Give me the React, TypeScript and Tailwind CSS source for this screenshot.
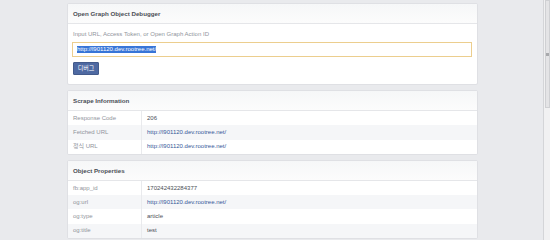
import type { ReactNode } from 'react'

const font = { fontFamily: '"Liberation Sans", Arial, "Noto Sans CJK KR", sans-serif' }

const URL = 'http://l901120.dev.rootree.net/'

interface Row {
  label: string
  value: string
  link?: boolean
}

const scrapeRows: Row[] = [
  { label: 'Response Code', value: '206' },
  { label: 'Fetched URL', value: URL, link: true },
  { label: '정식 URL', value: URL, link: true },
]

const propRows: Row[] = [
  { label: 'fb:app_id', value: '170242432284377' },
  { label: 'og:url', value: URL, link: true },
  { label: 'og:type', value: 'article' },
  { label: 'og:title', value: 'test' },
]

function Card({ title, children }: { title: string; children: ReactNode }) {
  return (
    <div className="bg-white border border-[#dfe0e4] rounded-[2px] overflow-hidden">
      <div className="h-[20px] flex items-center px-[5px] border-b border-[#e5e6e9] bg-gradient-to-b from-[#f6f7f8] to-[#fcfcfc]">
        <span className="text-[6.2px] font-bold text-[#4b4f56]">{title}</span>
      </div>
      {children}
    </div>
  )
}

function InfoTable({ rows }: { rows: Row[] }) {
  return (
    <div>
      {rows.map((row, i) => (
        <div key={row.label} className={`flex h-[14.3px] ${i % 2 === 1 ? 'bg-[#f5f6f8]' : 'bg-white'}`}>
          <div className="w-[74px] shrink-0 px-[5px] flex items-center border-r border-[#e9eaed] text-[6px] text-[#90949c]">
            {row.label}
          </div>
          <div
            className={`flex-1 px-[5px] flex items-center text-[6px] ${row.link ? 'text-[#365899]' : 'text-[#4b4f56]'}`}
          >
            {row.value}
          </div>
        </div>
      ))}
    </div>
  )
}

export default function App() {
  return (
    <div className="w-[550px] h-[240px] overflow-hidden bg-[#e9eaed] flex" style={font}>
      <div className="flex-1 pl-[67px] pt-[3px]">
        <div className="w-[411px] flex flex-col gap-[5px]">
          <Card title="Open Graph Object Debugger">
            <div className="pt-[5px] pb-[9px]">
              <div className="px-[5px] text-[6px] text-[#90949c] h-[10px] flex items-center">
                Input URL, Access Token, or Open Graph Action ID
              </div>
              <div className="mt-[3px] ml-[4px] mr-[5px] h-[15px] border border-[#ecce8e] bg-white flex items-center px-[4px]">
                <span className="text-[6px] leading-[7px] bg-[#3875d7] text-white">{URL}</span>
              </div>
              <div className="mt-[5px] ml-[5px]">
                <button className="h-[13px] w-[26px] bg-[#4e69a2] border border-[#435a8b] rounded-[1px] text-white text-[6px] flex items-center justify-center">
                  디버그
                </button>
              </div>
            </div>
          </Card>
          <Card title="Scrape Information">
            <InfoTable rows={scrapeRows} />
          </Card>
          <Card title="Object Properties">
            <InfoTable rows={propRows} />
          </Card>
        </div>
      </div>
      <div className="w-[7px] shrink-0 border-l border-[#d4d5d8] bg-[#f1f1f2] relative">
        <div className="absolute left-[1px] right-0 top-0 h-[108px] bg-[#e4e4e6] border border-[#cfd0d3] flex items-center justify-center">
          <div className="w-[3px] h-[3px] bg-[#a8a9ac]" />
        </div>
      </div>
    </div>
  )
}
